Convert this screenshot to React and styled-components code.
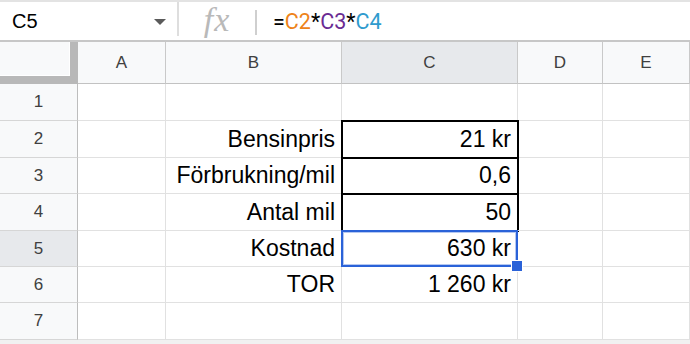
import React from "react";
import styled, { createGlobalStyle, css } from "styled-components";

const GlobalStyle = createGlobalStyle`
  html, body { margin: 0; padding: 0; background: #fff; overflow: hidden; }
  * { box-sizing: border-box; }
`;

const Page = styled.div`
  width: 690px;
  height: 344px;
  display: flex;
  flex-direction: column;
  overflow: hidden;
  background: #fff;
`;

const FormulaBar = styled.div`
  height: 42px;
  display: flex;
  align-items: stretch;
  border-top: 2px solid #e3e3e3;
  border-bottom: 2px solid #c7c7c7;
  background: #fff;
`;

const NameBox = styled.div`
  width: 177px;
  display: flex;
  align-items: center;
  justify-content: space-between;
  padding: 0 11px 0 12px;
  font-family: "Liberation Sans", Arial, sans-serif;
  font-size: 20px;
  color: #000;
`;

const Caret = styled.span`
  width: 0;
  height: 0;
  border-left: 6.5px solid transparent;
  border-right: 6.5px solid transparent;
  border-top: 6px solid #5a5a5a;
  margin-top: 2px;
`;

const Divider = styled.div`
  width: 2px;
  background: ${(p) => (p.$short ? "#cfcfcf" : "#dedede")};
  margin: ${(p) => (p.$short ? "8px 0 5px" : "0 0 4px")};
`;

const Fx = styled.div`
  width: 76px;
  display: flex;
  align-items: center;
  justify-content: center;
  font-family: "Liberation Serif", "Times New Roman", serif;
  font-style: italic;
  font-size: 34px;
  line-height: 1;
  color: #b9b9b9;
  padding-bottom: 3px;
  letter-spacing: 1px;
`;

const Formula = styled.div`
  display: flex;
  align-items: center;
  padding-left: 16px;
  font-family: Roboto, "Liberation Sans", sans-serif;
  font-size: 21.5px;
  color: #000;
`;

const Ref = styled.span`
  color: ${(p) => p.$color};
`;

const Sheet = styled.div`
  position: relative;
  display: grid;
  grid-template-columns: 78px 88px 176px 176px 85px 1fr;
  grid-template-rows: 42px 37px 37px 36px 37px 36px 36px 37px;
`;

const Corner = styled.div`
  background: #f8f9fa;
  border-right: 8px solid #b8b8b8;
  border-bottom: 8px solid #b8b8b8;
  box-shadow: inset -1px -1px 0 #fff;
`;

const ColHeader = styled.div`
  display: flex;
  align-items: center;
  justify-content: center;
  background: ${(p) => (p.$active ? "#e7e9ec" : "#f8f9fa")};
  border-right: 1px solid #c9c9c9;
  border-bottom: 1px solid #c2c2c2;
  font-family: "Liberation Sans", Arial, sans-serif;
  font-size: 17px;
  color: #404040;
`;

const RowHeader = styled.div`
  display: flex;
  align-items: center;
  justify-content: center;
  background: ${(p) => (p.$active ? "#e7e9ec" : "#f8f9fa")};
  border-right: 1px solid #bdbdbd;
  border-bottom: 1px solid #d6d6d6;
  font-family: "Liberation Sans", Arial, sans-serif;
  font-size: 17px;
  color: #404040;
`;

const Cell = styled.div`
  display: flex;
  align-items: center;
  justify-content: flex-end;
  padding-right: 6px;
  border-right: 1px solid #e1e1e1;
  border-bottom: 1px solid #e1e1e1;
  font-family: "Liberation Sans", Arial, sans-serif;
  font-size: 23px;
  color: #000;
  white-space: nowrap;
  ${(p) =>
    p.$boxed &&
    css`
      box-shadow: 0 0 0 1px #000, inset 1px 1px 0 #000;
      border-right-color: #000;
      border-bottom-color: #000;
    `}
  ${(p) =>
    p.$selected &&
    css`
      position: relative;
      z-index: 3;
    `}
`;

const Selection = styled.div`
  position: absolute;
  top: -1px;
  left: -1px;
  right: -1px;
  bottom: -1px;
  border: 2px solid #2a62d8;
  box-shadow: inset 0 0 0 1px rgba(42, 98, 216, 0.35);
  pointer-events: none;
`;

const FillHandle = styled.div`
  position: absolute;
  right: -7px;
  bottom: -7px;
  width: 12px;
  height: 12px;
  background: #2a62d8;
  border: 1px solid #fff;
`;

const BottomStrip = styled.div`
  flex: 1;
  background: #f1f1f1;
`;

const columns = ["A", "B", "C", "D", "E"];
const rows = [
  ["", "", "", "", ""],
  ["", "Bensinpris", "21 kr", "", ""],
  ["", "Förbrukning/mil", "0,6", "", ""],
  ["", "Antal mil", "50", "", ""],
  ["", "Kostnad", "630 kr", "", ""],
  ["", "TOR", "1 260 kr", "", ""],
  ["", "", "", "", ""],
];

export default function App() {
  return (
    <>
      <GlobalStyle />
      <Page>
        <FormulaBar>
          <NameBox>
            C5
            <Caret />
          </NameBox>
          <Divider />
          <Fx>fx</Fx>
          <Divider $short />
          <Formula>
            =<Ref $color="#ee8319">C2</Ref>*<Ref $color="#6a2b93">C3</Ref>*
            <Ref $color="#2f9bce">C4</Ref>
          </Formula>
        </FormulaBar>
        <Sheet>
          <Corner />
          {columns.map((c) => (
            <ColHeader key={c} $active={c === "C"}>
              {c}
            </ColHeader>
          ))}
          {rows.map((r, ri) => {
            const rowNum = ri + 1;
            return (
              <React.Fragment key={rowNum}>
                <RowHeader $active={rowNum === 5}>{rowNum}</RowHeader>
                {r.map((v, ci) => {
                  const isC = ci === 2;
                  const boxed = isC && rowNum >= 2 && rowNum <= 4;
                  const selected = isC && rowNum === 5;
                  return (
                    <Cell key={ci} $boxed={boxed} $selected={selected}>
                      {v}
                      {selected && (
                        <Selection>
                          <FillHandle />
                        </Selection>
                      )}
                    </Cell>
                  );
                })}
              </React.Fragment>
            );
          })}
        </Sheet>
        <BottomStrip />
      </Page>
    </>
  );
}
